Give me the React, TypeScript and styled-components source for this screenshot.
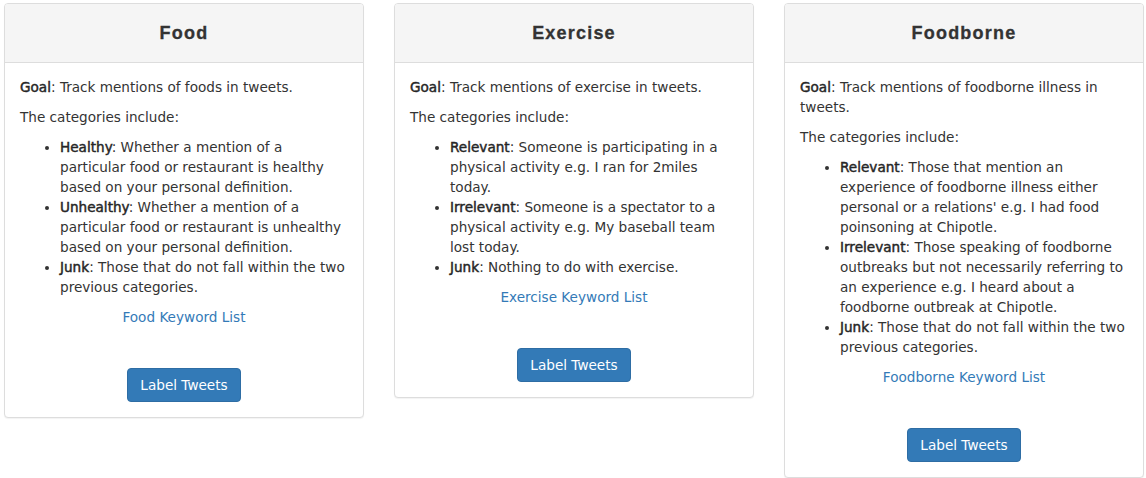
import React from "react";
import styled, { createGlobalStyle } from "styled-components";

const GlobalStyle = createGlobalStyle`
  html, body { margin: 0; padding: 0; background: #fff; }
  body {
    font-family: "DejaVu Sans", Verdana, sans-serif;
    font-size: 13.6px;
    line-height: 20px;
    color: #333;
  }
  * { box-sizing: border-box; }
`;

const Row = styled.div`
  display: flex;
  align-items: flex-start;
  gap: 30px;
  padding: 3px 0 0 4px;
`;

const Panel = styled.div`
  width: 360px;
  background: #fff;
  border: 1px solid #ddd;
  border-radius: 4px;
  box-shadow: 0 1px 1px rgba(0, 0, 0, 0.05);
  overflow: hidden;
`;

const Heading = styled.div`
  height: 59px;
  display: flex;
  align-items: center;
  justify-content: center;
  background: #f5f5f5;
  border-bottom: 1px solid #ddd;
`;

const Title = styled.h3`
  margin: 0;
  font-family: "Liberation Sans", Arial, sans-serif;
  font-weight: bold;
  font-size: 18px;
  letter-spacing: 1.2px;
  -webkit-text-stroke: 0.3px #333;
  line-height: 20px;
  color: #333;
`;

const Body = styled.div`
  padding: 14px 15px 15px;
`;

const Para = styled.p`
  margin: 0 0 10px;
`;

const Strong = styled.b`
  font-weight: normal;
  color: #262626;
  -webkit-text-stroke: 0.45px #262626;
`;

const List = styled.ul`
  margin: 0 0 10px;
  padding-left: 40px;
`;

const Item = styled.li``;

const Center = styled.div`
  text-align: center;
`;

const KeywordLink = styled.a`
  color: #337ab7;
  text-decoration: none;
`;

const ButtonWrap = styled.div`
  text-align: center;
  margin-top: 41px;
`;

const Button = styled.button`
  display: inline-block;
  font-family: "DejaVu Sans", Verdana, sans-serif;
  font-size: 13.6px;
  line-height: 20px;
  padding: 6px 12px;
  color: #fff;
  background: #337ab7;
  border: 1px solid #2e6da4;
  border-radius: 4px;
  cursor: pointer;
`;

type Cat = { name: string; text: string };
type CardData = { title: string; goal: string; cats: Cat[]; link: string };

const cards: CardData[] = [
  {
    title: "Food",
    goal: "Track mentions of foods in tweets.",
    cats: [
      {
        name: "Healthy",
        text: "Whether a mention of a particular food or restaurant is healthy based on your personal definition.",
      },
      {
        name: "Unhealthy",
        text: "Whether a mention of a particular food or restaurant is unhealthy based on your personal definition.",
      },
      { name: "Junk", text: "Those that do not fall within the two previous categories." },
    ],
    link: "Food Keyword List",
  },
  {
    title: "Exercise",
    goal: "Track mentions of exercise in tweets.",
    cats: [
      {
        name: "Relevant",
        text: "Someone is participating in a physical activity e.g. I ran for 2miles today.",
      },
      {
        name: "Irrelevant",
        text: "Someone is a spectator to a physical activity e.g. My baseball team lost today.",
      },
      { name: "Junk", text: "Nothing to do with exercise." },
    ],
    link: "Exercise Keyword List",
  },
  {
    title: "Foodborne",
    goal: "Track mentions of foodborne illness in tweets.",
    cats: [
      {
        name: "Relevant",
        text: "Those that mention an experience of foodborne illness either personal or a relations' e.g. I had food poinsoning at Chipotle.",
      },
      {
        name: "Irrelevant",
        text: "Those speaking of foodborne outbreaks but not necessarily referring to an experience e.g. I heard about a foodborne outbreak at Chipotle.",
      },
      { name: "Junk", text: "Those that do not fall within the two previous categories." },
    ],
    link: "Foodborne Keyword List",
  },
];

const Card: React.FC<{ data: CardData }> = ({ data }) => (
  <Panel>
    <Heading>
      <Title>{data.title}</Title>
    </Heading>
    <Body>
      <Para>
        <Strong>Goal</Strong>: {data.goal}
      </Para>
      <Para>The categories include:</Para>
      <List>
        {data.cats.map((c) => (
          <Item key={c.name}>
            <Strong>{c.name}</Strong>: {c.text}
          </Item>
        ))}
      </List>
      <Center>
        <KeywordLink href="#">{data.link}</KeywordLink>
      </Center>
      <ButtonWrap>
        <Button>Label Tweets</Button>
      </ButtonWrap>
    </Body>
  </Panel>
);

export default function App() {
  return (
    <>
      <GlobalStyle />
      <Row>
        {cards.map((c) => (
          <Card key={c.title} data={c} />
        ))}
      </Row>
    </>
  );
}
